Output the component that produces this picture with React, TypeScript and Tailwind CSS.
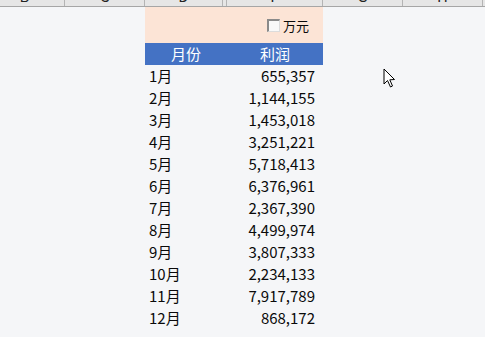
const cols = [
  { name: "B", w: "w-[80px]" },
  { name: "C", w: "w-[80px]" },
  { name: "D", w: "w-[78px]" },
  { name: "", w: "w-[4px]" },
  { name: "F", w: "w-[96px]" },
  { name: "G", w: "w-[80px]" },
  { name: "H", w: "w-[80px]" },
];

const rows: [string, string][] = [
  ["1月", "655,357"],
  ["2月", "1,144,155"],
  ["3月", "1,453,018"],
  ["4月", "3,251,221"],
  ["5月", "5,718,413"],
  ["6月", "6,376,961"],
  ["7月", "2,367,390"],
  ["8月", "4,499,974"],
  ["9月", "3,807,333"],
  ["10月", "2,234,133"],
  ["11月", "7,917,789"],
  ["12月", "868,172"],
];

const App = () => {
  return (
    <div
      className="relative w-[485px] h-[337px] overflow-hidden bg-[#f5f6f8] text-[#0a0a0a]"
      style={{ fontFamily: '"Noto Sans CJK SC", "Noto Sans", sans-serif' }}
    >
      {/* column letters strip */}
      <div className="flex h-[7px] -ml-[15px] bg-[#e6e6e6] border-b border-[#a6a6a6] overflow-hidden">
        {cols.map((c, i) => (
          <div
            key={i}
            className={`${c.w} shrink-0 h-full border-r border-[#b4b4b4] flex justify-center`}
          >
            <span className="text-[15px] leading-[15px] -mt-[12px] text-[#222]">{c.name}</span>
          </div>
        ))}
      </div>

      {/* table */}
      <div className="ml-[145px] w-[178px]">
        <div className="h-[36px] bg-[#fce4d6] flex items-center justify-end pr-[14px] gap-[3px]">
          <div className="w-[13px] h-[13px] bg-[#f9f9f9] border-t-2 border-l-2 border-[#8a8a8a] border-r border-b border-r-[#dcdcdc] border-b-[#dcdcdc]" />
          <span className="text-[13px] leading-none">万元</span>
        </div>
        <div className="h-[22px] bg-[#4472c4] text-white text-[15px] flex items-center">
          <div className="w-[82px] text-center">月份</div>
          <div className="w-[96px] text-center">利润</div>
        </div>
        {rows.map(([m, v]) => (
          <div key={m} className="h-[22px] flex items-center text-[15px]">
            <div className="w-[82px] pl-[4px]">{m}</div>
            <div className="w-[96px] text-right pr-[8px]">{v}</div>
          </div>
        ))}
      </div>

      {/* mouse pointer */}
      <svg
        className="absolute left-[383px] top-[68px]"
        width="14"
        height="21"
        viewBox="0 0 14 21"
      >
        <path
          d="M1 1 L1 16 L4.5 12.5 L7.5 19 L9.5 18 L6.8 11.8 L11.5 11.5 Z"
          fill="#fff"
          stroke="#000"
          strokeWidth="1"
          strokeLinejoin="miter"
        />
      </svg>
    </div>
  );
};

export default App;
